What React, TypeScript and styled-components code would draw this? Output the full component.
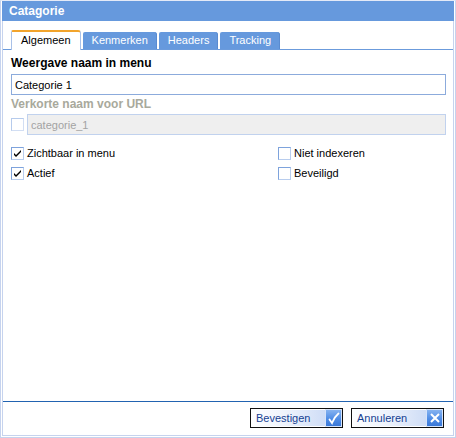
import React from 'react';
import styled, { createGlobalStyle } from 'styled-components';

const GlobalStyle = createGlobalStyle`
  html, body {
    margin: 0;
    padding: 0;
    background: #ffffff;
  }
  body {
    font-family: "Liberation Sans", Arial, sans-serif;
    font-size: 11px;
    color: #000;
  }
  * {
    box-sizing: border-box;
  }
`;

const Window = styled.div`
  width: 456px;
  height: 438px;
  border: 1px solid #c6d3ee;
  border-top-color: #e4eaf7;
  padding: 0 1px 1px 1px;
  background: #fff;
  display: flex;
  flex-direction: column;
`;

const TitleBar = styled.div`
  height: 20px;
  line-height: 20px;
  padding-left: 7px;
  background: #6699dd;
  color: #fff;
  font-weight: bold;
  font-size: 12px;
  flex-shrink: 0;
`;

const Body = styled.div`
  flex: 1;
  display: flex;
  flex-direction: column;
  border: 1px solid #c6d3ee;
  border-top: none;
`;

const TabStrip = styled.div`
  display: flex;
  align-items: flex-end;
  gap: 2px;
  padding: 9px 0 0 8px;
  border-bottom: 1px solid #6b9bdc;
`;

const Tab = styled.div<{ $active?: boolean }>`
  padding: 0 9px;
  font-size: 11px;
  white-space: nowrap;
  border-radius: 2px 3px 0 0;
  ${(p) =>
    p.$active
      ? `
    height: 20px;
    margin-bottom: -1px;
    line-height: 17px;
    background: #fff;
    color: #000;
    border-top: 2px solid #f2a42c;
    border-left: 1px solid #a9c1e8;
    border-right: 1px solid #a9c1e8;
  `
      : `
    height: 17px;
    line-height: 17px;
    background: #6699dd;
    color: #fff;
    box-shadow: inset -1px 0 0 #5a8bd0;
  `}
`;

const Form = styled.div`
  padding: 6px 7px 0 8px;
  display: flex;
  flex-direction: column;
`;

const FieldLabel = styled.div<{ $disabled?: boolean }>`
  font-weight: bold;
  font-size: 12px;
  line-height: 14px;
  color: ${(p) => (p.$disabled ? '#a8a99c' : '#000')};
  margin-top: ${(p) => (p.$disabled ? '2px' : '0')};
`;

const TextInput = styled.input<{ $disabled?: boolean }>`
  height: 21px;
  width: 100%;
  margin: 0;
  padding: 0 3px;
  font-family: "Liberation Sans", Arial, sans-serif;
  font-size: 11px;
  outline: none;
  border: 1px solid ${(p) => (p.$disabled ? '#c1d2ee' : '#8cabdc')};
  background: ${(p) => (p.$disabled ? '#efefef' : '#fff')};
  color: ${(p) => (p.$disabled ? '#a3a3a3' : '#000')};
`;

const InputWrap = styled.div`
  margin-top: 4px;
`;

const SlugRow = styled.div`
  margin-top: 3px;
  display: flex;
  align-items: center;
  gap: 3px;
`;

const CheckGrid = styled.div`
  margin-top: 8px;
  display: grid;
  grid-template-columns: 267px 1fr;
  grid-auto-rows: 20px;
`;

const CheckRow = styled.label`
  display: flex;
  align-items: center;
  gap: 3px;
  font-size: 11px;
  white-space: nowrap;
`;

const Box = styled.span<{ $disabled?: boolean }>`
  width: 13px;
  height: 13px;
  flex-shrink: 0;
  display: inline-flex;
  align-items: center;
  justify-content: center;
  background: #fff;
  border: 1px solid ${(p) => (p.$disabled ? '#b6cbec' : '#7ea3dc')};
  border-right-color: ${(p) => (p.$disabled ? '#d2def3' : '#b8cdee')};
  border-bottom-color: ${(p) => (p.$disabled ? '#d2def3' : '#b8cdee')};
`;

const Footer = styled.div`
  margin-top: auto;
  border-top: 1px solid #2263b1;
  padding: 6px 9px 7px 0;
  display: flex;
  justify-content: flex-end;
  gap: 8px;
`;

const Button = styled.button`
  width: 93px;
  height: 20px;
  padding: 0;
  margin: 0;
  display: flex;
  border: 1px solid #101010;
  background: #fff;
  cursor: pointer;
`;

const ButtonLabel = styled.span`
  flex: 1;
  height: 100%;
  text-align: left;
  padding-left: 4px;
  line-height: 16px;
  font-family: "Liberation Sans", Arial, sans-serif;
  font-size: 11px;
  color: #163f92;
  border: 1px solid #ffffff;
  border-right: none;
  background: linear-gradient(to right, #fdfeff 0%, #eef3fc 45%, #cfddf6 100%);
`;

const ButtonIcon = styled.span`
  width: 17px;
  height: 100%;
  display: flex;
  align-items: center;
  justify-content: center;
  background: linear-gradient(to bottom, #86b3f0 0%, #4f8de6 55%, #3a78d8 100%);
  border: 1px solid #d6e4fa;
`;

const CheckMark = () => (
  <svg width="9" height="9" viewBox="0 0 9 9">
    <path d="M1 4 L3 6 L8 1 L8 3 L3 8 L1 6 Z" fill="#000" />
  </svg>
);

const Checkbox: React.FC<{ checked?: boolean; disabled?: boolean }> = ({ checked, disabled }) => (
  <Box $disabled={disabled}>{checked && <CheckMark />}</Box>
);

const ConfirmIcon = () => (
  <svg width="13" height="13" viewBox="0 0 13 13">
    <path d="M2.5 7.5 L5 11 C6.5 7 8.5 4 11.5 1.5" stroke="#fff" strokeWidth="1.8" fill="none" strokeLinecap="round" />
  </svg>
);

const CancelIcon = () => (
  <svg width="12" height="12" viewBox="0 0 12 12">
    <path d="M2 2 L10 10 M10 2 L2 10" stroke="#fff" strokeWidth="2" fill="none" />
  </svg>
);

const tabs = ['Algemeen', 'Kenmerken', 'Headers', 'Tracking'];

const App: React.FC = () => {
  return (
    <>
      <GlobalStyle />
      <Window>
        <TitleBar>Catagorie</TitleBar>
        <Body>
          <TabStrip>
            {tabs.map((t, i) => (
              <Tab key={t} $active={i === 0}>
                {t}
              </Tab>
            ))}
          </TabStrip>
          <Form>
            <FieldLabel>Weergave naam in menu</FieldLabel>
            <InputWrap>
              <TextInput defaultValue="Categorie 1" />
            </InputWrap>
            <FieldLabel $disabled>Verkorte naam voor URL</FieldLabel>
            <SlugRow>
              <Checkbox disabled />
              <TextInput $disabled disabled defaultValue="categorie_1" />
            </SlugRow>
            <CheckGrid>
              <CheckRow>
                <Checkbox checked />
                Zichtbaar in menu
              </CheckRow>
              <CheckRow>
                <Checkbox />
                Niet indexeren
              </CheckRow>
              <CheckRow>
                <Checkbox checked />
                Actief
              </CheckRow>
              <CheckRow>
                <Checkbox />
                Beveiligd
              </CheckRow>
            </CheckGrid>
          </Form>
          <Footer>
            <Button>
              <ButtonLabel>Bevestigen</ButtonLabel>
              <ButtonIcon>
                <ConfirmIcon />
              </ButtonIcon>
            </Button>
            <Button>
              <ButtonLabel>Annuleren</ButtonLabel>
              <ButtonIcon>
                <CancelIcon />
              </ButtonIcon>
            </Button>
          </Footer>
        </Body>
      </Window>
    </>
  );
};

export default App;
